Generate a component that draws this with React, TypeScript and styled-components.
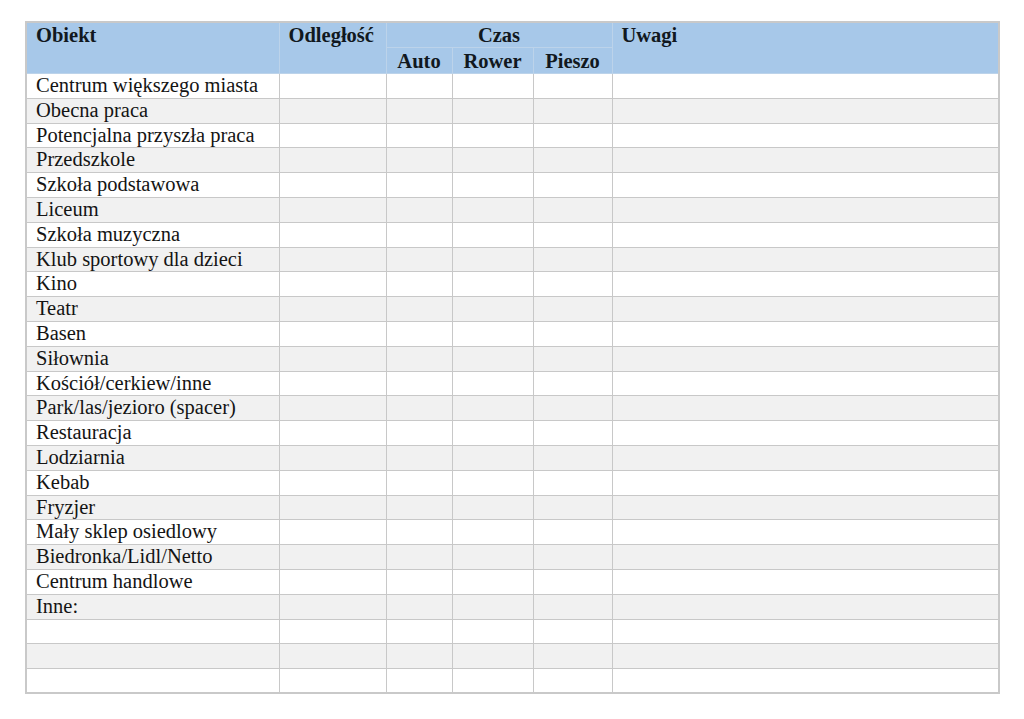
import React from "react";
import styled, { createGlobalStyle } from "styled-components";

const GlobalStyle = createGlobalStyle`
  html, body {
    margin: 0;
    padding: 0;
    background: #ffffff;
  }
`;

const Page = styled.div`
  padding: 21px 26px 0 25px;
  font-family: "Liberation Serif", "Times New Roman", serif;
  color: #141414;
`;

const Table = styled.table`
  width: 973px;
  table-layout: fixed;
  border-collapse: collapse;
  border: 2px solid #c9c9c9;
`;

const HeadRow = styled.tr<{ $h: number }>`
  height: ${(p) => p.$h}px;
  background: #a7c8e9;
`;

const HeadCell = styled.th<{ $center?: boolean; $top?: boolean }>`
  border: 1px solid #bcd3ea;
  padding: 0 9px;
  font-size: 20.5px;
  font-weight: bold;
  line-height: 24px;
  text-align: ${(p) => (p.$center ? "center" : "left")};
  vertical-align: ${(p) => (p.$top ? "top" : "middle")};
  color: #111820;
  white-space: nowrap;
`;

const BodyRow = styled.tr<{ $shade: boolean }>`
  height: 24.8px;
  background: ${(p) => (p.$shade ? "#f1f1f1" : "#ffffff")};
`;

const Cell = styled.td`
  border: 1px solid #c8c8c8;
  padding: 0 9px;
  font-size: 20.5px;
  line-height: 22px;
  vertical-align: top;
  white-space: nowrap;
  overflow: hidden;
`;

const places = [
  "Centrum większego miasta",
  "Obecna praca",
  "Potencjalna przyszła praca",
  "Przedszkole",
  "Szkoła podstawowa",
  "Liceum",
  "Szkoła muzyczna",
  "Klub sportowy dla dzieci",
  "Kino",
  "Teatr",
  "Basen",
  "Siłownia",
  "Kościół/cerkiew/inne",
  "Park/las/jezioro (spacer)",
  "Restauracja",
  "Lodziarnia",
  "Kebab",
  "Fryzjer",
  "Mały sklep osiedlowy",
  "Biedronka/Lidl/Netto",
  "Centrum handlowe",
  "Inne:",
  "",
  "",
  "",
];

const App: React.FC = () => {
  return (
    <Page>
      <GlobalStyle />
      <Table>
        <colgroup>
          <col style={{ width: 253 }} />
          <col style={{ width: 107 }} />
          <col style={{ width: 66 }} />
          <col style={{ width: 81 }} />
          <col style={{ width: 79 }} />
          <col style={{ width: 387 }} />
        </colgroup>
        <thead>
          <HeadRow $h={24}>
            <HeadCell rowSpan={2} $top>Obiekt</HeadCell>
            <HeadCell rowSpan={2} $top>Odległość</HeadCell>
            <HeadCell colSpan={3} $center>Czas</HeadCell>
            <HeadCell rowSpan={2} $top>Uwagi</HeadCell>
          </HeadRow>
          <HeadRow $h={26}>
            <HeadCell $center>Auto</HeadCell>
            <HeadCell $center>Rower</HeadCell>
            <HeadCell $center>Pieszo</HeadCell>
          </HeadRow>
        </thead>
        <tbody>
          {places.map((name, i) => (
            <BodyRow key={i} $shade={i % 2 === 1}>
              <Cell>{name}</Cell>
              <Cell />
              <Cell />
              <Cell />
              <Cell />
              <Cell />
            </BodyRow>
          ))}
        </tbody>
      </Table>
    </Page>
  );
};

export default App;
